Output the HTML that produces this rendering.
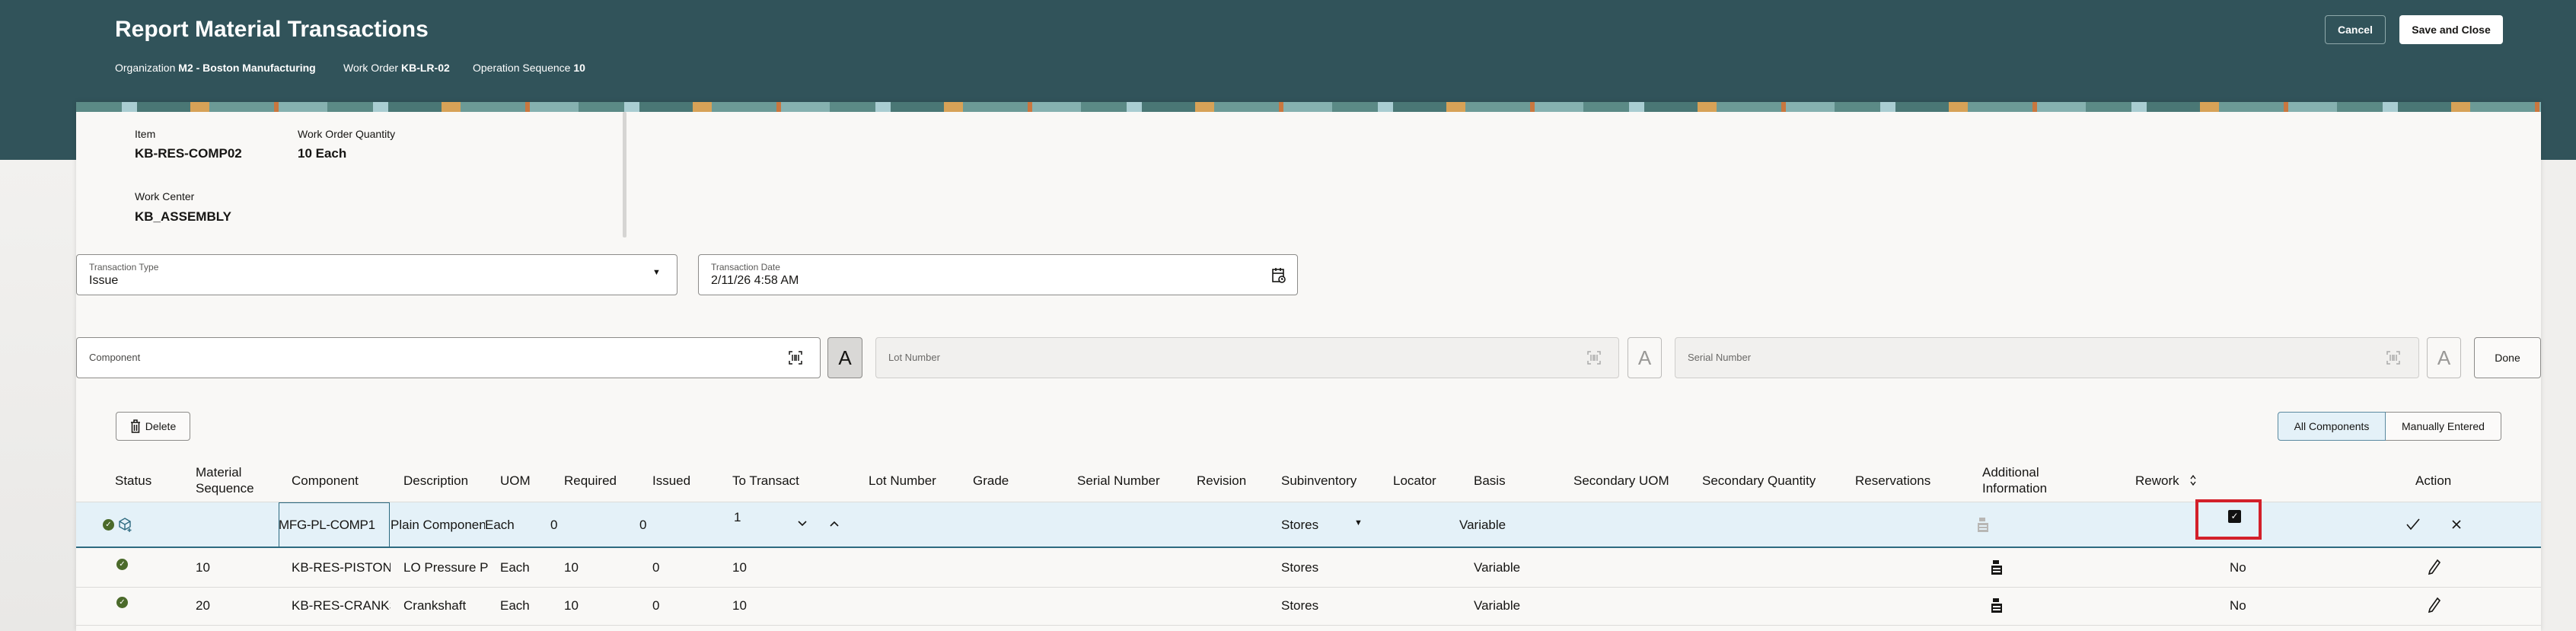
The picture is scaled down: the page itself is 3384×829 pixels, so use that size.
<!DOCTYPE html>
<html><head><meta charset="utf-8"><style>
*{box-sizing:border-box;margin:0;padding:0}
body{width:3384px;height:829px;overflow:hidden;background:#f0efed;font-family:"Liberation Sans",sans-serif;color:#161513;position:relative}
.a{position:absolute;white-space:nowrap}
.hdr{left:0;top:0;width:3384px;height:210px;background:#31535a}
.card{left:100px;top:134px;width:3238px;height:695px;background:#f9f8f6;box-shadow:0 0 6px rgba(0,0,0,.12)}
.band{left:100px;top:134px;width:3238px;height:13px;background:repeating-linear-gradient(90deg,#5b8a86 0 60px,#a9cdd2 60px 80px,#4a7775 80px 150px,#d7a257 150px 175px,#6c9a96 175px 260px,#c9773f 260px 266px,#86b1b0 266px 330px)}
.fld{border:1px solid #8c8b89;border-radius:4px;background:#fff}
.dis{border:1px solid #cfcecc;border-radius:4px;background:#f1f0ee}
.th{font-size:17px;color:#161513;line-height:21px}
.td{font-size:17px;color:#161513}
.btn{border:1px solid #8c8b89;border-radius:4px;background:#fbfaf9;font-size:14px;display:flex;align-items:center;justify-content:center}
.chk{width:15px;height:15px;border-radius:50%;background:#4b6a2a;color:#fff;font-size:10px;line-height:15px;text-align:center}
</style></head><body>
<div class="a hdr"></div>
<div class="a" style="left:0;top:210px;width:100px;height:619px;background:linear-gradient(180deg,#f2f1ef,#e9e8e6)"></div>
<div class="a card"></div>
<div class="a band"></div>
<div class="a" style="left:151px;top:22px;font-size:30px;font-weight:bold;color:#fff">Report Material Transactions</div>
<div class="a" style="left:151px;top:81px;font-size:14px;color:#fff">Organization <b>M2 - Boston Manufacturing</b></div>
<div class="a" style="left:451px;top:81px;font-size:14px;color:#fff">Work Order <b>KB-LR-02</b></div>
<div class="a" style="left:621px;top:81px;font-size:14px;color:#fff">Operation Sequence <b>10</b></div>
<div class="a" style="left:3054px;top:20px;width:80px;height:38px;border:1px solid #8fa9ab;border-radius:4px;color:#fff;font-size:14px;font-weight:bold;display:flex;align-items:center;justify-content:center">Cancel</div>
<div class="a" style="left:3152px;top:20px;width:136px;height:38px;background:#fff;border-radius:4px;font-size:14px;font-weight:bold;display:flex;align-items:center;justify-content:center">Save and Close</div>

<div class="a" style="left:177px;top:168px;font-size:14px">Item</div>
<div class="a" style="left:177px;top:192px;font-size:17px;font-weight:bold">KB-RES-COMP02</div>
<div class="a" style="left:391px;top:168px;font-size:14px">Work Order Quantity</div>
<div class="a" style="left:391px;top:192px;font-size:17px;font-weight:bold">10 Each</div>
<div class="a" style="left:177px;top:250px;font-size:14px">Work Center</div>
<div class="a" style="left:177px;top:275px;font-size:17px;font-weight:bold">KB_ASSEMBLY</div>
<div class="a" style="left:818px;top:147px;width:5px;height:165px;background:#d6d5d3;border-radius:2px"></div>

<div class="a fld" style="left:100px;top:334px;width:790px;height:54px"></div>
<div class="a" style="left:117px;top:344px;font-size:12px;color:#5a5957">Transaction Type</div>
<div class="a" style="left:117px;top:360px;font-size:16px">Issue</div>
<div class="a" style="left:857px;top:352px;font-size:11px">▼</div>
<div class="a fld" style="left:917px;top:334px;width:788px;height:54px"></div>
<div class="a" style="left:934px;top:344px;font-size:12px;color:#5a5957">Transaction Date</div>
<div class="a" style="left:934px;top:360px;font-size:16px">2/11/26 4:58 AM</div>
<svg class="a" style="left:1670px;top:351px" width="20" height="22" viewBox="0 0 20 22" fill="none" stroke="#161513" stroke-width="1.6"><rect x="2" y="3" width="14" height="16"/><line x1="6" y1="1" x2="6" y2="5"/><line x1="12" y1="1" x2="12" y2="5"/><line x1="2" y1="8" x2="16" y2="8"/><circle cx="14" cy="16" r="4" fill="#fff"/><path d="M14 14v2h1.5"/></svg>

<svg width="0" height="0" style="position:absolute"><defs><g id="bc"><path d="M1 5V1h4M13 1h4v4M17 13v4h-4M5 17H1v-4" fill="none" stroke="currentColor" stroke-width="1.5"/><path d="M5 5v8M8 5v8M10 5v8M13 5v8" stroke="currentColor" stroke-width="1.5"/></g></defs></svg>
<div class="a fld" style="left:100px;top:443px;width:978px;height:54px"></div>
<div class="a" style="left:117px;top:462px;font-size:13px;color:#4a4947">Component</div>
<svg class="a" style="left:1036px;top:461px;color:#161513" width="18" height="18"><use href="#bc"/></svg>
<div class="a" style="left:1087px;top:443px;width:46px;height:54px;background:#d9d8d6;border:1px solid #8c8b89;border-radius:4px;font-size:26px;text-align:center;line-height:52px">A</div>
<div class="a dis" style="left:1150px;top:443px;width:977px;height:54px"></div>
<div class="a" style="left:1167px;top:462px;font-size:13px;color:#6a6967">Lot Number</div>
<svg class="a" style="left:2085px;top:461px;color:#aaa" width="18" height="18"><use href="#bc"/></svg>
<div class="a" style="left:2138px;top:443px;width:45px;height:54px;border:1px solid #bcbbb9;border-radius:4px;font-size:26px;text-align:center;line-height:52px;color:#9a9997">A</div>
<div class="a dis" style="left:2200px;top:443px;width:978px;height:54px"></div>
<div class="a" style="left:2217px;top:462px;font-size:13px;color:#6a6967">Serial Number</div>
<svg class="a" style="left:3135px;top:461px;color:#aaa" width="18" height="18"><use href="#bc"/></svg>
<div class="a" style="left:3188px;top:443px;width:45px;height:54px;border:1px solid #bcbbb9;border-radius:4px;font-size:26px;text-align:center;line-height:52px;color:#9a9997">A</div>
<div class="a btn" style="left:3250px;top:443px;width:88px;height:54px">Done</div>

<div class="a btn" style="left:152px;top:541px;width:98px;height:38px;gap:6px"><svg width="14" height="18" viewBox="0 0 14 18" fill="none" stroke="#161513" stroke-width="1.5"><path d="M1 4h12M5 4V1h4v3M2.5 4v13h9V4M5.5 7v8M8.5 7v8"/></svg>Delete</div>
<div class="a" style="left:2992px;top:541px;width:142px;height:38px;background:#e4f1f8;border:1px solid #5b8aa0;border-radius:4px 0 0 4px;font-size:14px;display:flex;align-items:center;justify-content:center">All Components</div>
<div class="a" style="left:3134px;top:541px;width:152px;height:38px;background:#fbfaf9;border:1px solid #8c8b89;border-left:none;border-radius:0 4px 4px 0;font-size:14px;display:flex;align-items:center;justify-content:center">Manually Entered</div>

<div class="a th" style="left:151px;top:621px">Status</div>
<div class="a th" style="left:257px;top:610px">Material<br>Sequence</div>
<div class="a th" style="left:383px;top:621px">Component</div>
<div class="a th" style="left:530px;top:621px">Description</div>
<div class="a th" style="left:657px;top:621px">UOM</div>
<div class="a th" style="left:741px;top:621px">Required</div>
<div class="a th" style="left:857px;top:621px">Issued</div>
<div class="a th" style="left:962px;top:621px">To Transact</div>
<div class="a th" style="left:1141px;top:621px">Lot Number</div>
<div class="a th" style="left:1278px;top:621px">Grade</div>
<div class="a th" style="left:1415px;top:621px">Serial Number</div>
<div class="a th" style="left:1572px;top:621px">Revision</div>
<div class="a th" style="left:1683px;top:621px">Subinventory</div>
<div class="a th" style="left:1830px;top:621px">Locator</div>
<div class="a th" style="left:1936px;top:621px">Basis</div>
<div class="a th" style="left:2067px;top:621px">Secondary UOM</div>
<div class="a th" style="left:2236px;top:621px">Secondary Quantity</div>
<div class="a th" style="left:2437px;top:621px">Reservations</div>
<div class="a th" style="left:2604px;top:610px">Additional<br>Information</div>
<div class="a th" style="left:2805px;top:621px">Rework</div>
<svg class="a" style="left:2876px;top:623px" width="10" height="16" viewBox="0 0 10 16" fill="none" stroke="#161513" stroke-width="1.4"><path d="M2 6l3-4 3 4M2 10l3 4 3-4"/></svg>
<div class="a th" style="left:3173px;top:621px">Action</div>

<div class="a" style="left:100px;top:659px;width:3238px;height:1px;background:#dcdbd9"></div>
<div class="a" style="left:100px;top:660px;width:3238px;height:60px;background:#e4f1f8;border-bottom:2px solid #2d6a80"></div>
<div class="a chk" style="left:135px;top:682px">✓</div>
<svg class="a" style="left:156px;top:680px" width="18" height="20" viewBox="0 0 18 20" fill="none" stroke="#2d6a80" stroke-width="1.4"><path d="M8 1l7 4v7l-7 4-7-4V5z M1 5l7 4 7-4 M8 9v7"/><path d="M14 14v5M11.5 16.5h5"/></svg>
<div class="a" style="left:366px;top:660px;width:146px;height:60px;border:1px solid #2d6a80;border-bottom:none"></div>
<div class="a td" style="left:366px;top:680px;letter-spacing:-0.3px">MFG-PL-COMP1</div>
<div class="a td" style="left:513px;top:680px;width:124px;overflow:hidden">Plain Component</div>
<div class="a td" style="left:637px;top:680px">Each</div>
<div class="a td" style="left:723px;top:680px">0</div>
<div class="a td" style="left:840px;top:680px">0</div>
<div class="a td" style="left:964px;top:670px">1</div>
<svg class="a" style="left:1048px;top:684px" width="12" height="8" viewBox="0 0 12 8" fill="none" stroke="#161513" stroke-width="1.6"><path d="M1 1l5 5 5-5"/></svg>
<svg class="a" style="left:1090px;top:684px" width="12" height="8" viewBox="0 0 12 8" fill="none" stroke="#161513" stroke-width="1.6"><path d="M1 7l5-5 5 5"/></svg>
<div class="a td" style="left:1683px;top:680px">Stores</div>
<div class="a" style="left:1779px;top:681px;font-size:11px">▼</div>
<div class="a td" style="left:1917px;top:680px">Variable</div>
<svg class="a" style="left:2597px;top:680px" width="16" height="20" viewBox="0 0 16 20" fill="#b8b7b5"><rect x="3" y="0" width="8" height="5"/><rect x="1" y="7" width="14" height="12"/><rect x="3" y="10" width="10" height="2" fill="#e4f1f8"/><rect x="3" y="14" width="10" height="2" fill="#e4f1f8"/></svg>
<div class="a" style="left:2884px;top:656px;width:87px;height:53px;border:4px solid #d3202a"></div>
<div class="a" style="left:2927px;top:670px;width:17px;height:17px;background:#111;border-radius:2px;color:#fff;font-size:12px;text-align:center;line-height:17px">✓</div>
<svg class="a" style="left:3160px;top:681px" width="20" height="16" viewBox="0 0 20 16" fill="none" stroke="#161513" stroke-width="1.6"><path d="M2 8l5 6L18 1"/></svg>
<svg class="a" style="left:3220px;top:682px" width="14" height="14" viewBox="0 0 14 14" fill="none" stroke="#161513" stroke-width="1.6"><path d="M2 2l10 10M12 2L2 12"/></svg>

<div class="a" style="left:100px;top:771px;width:3238px;height:1px;background:#dcdbd9"></div>
<div class="a" style="left:100px;top:821px;width:3238px;height:1px;background:#dcdbd9"></div>
<div class="a chk" style="left:153px;top:734px">✓</div>
<div class="a td" style="left:257px;top:736px">10</div>
<div class="a td" style="left:383px;top:736px;width:130px;overflow:hidden">KB-RES-PISTONCAP</div>
<div class="a td" style="left:530px;top:736px;width:111px;overflow:hidden">LO Pressure Piston</div>
<div class="a td" style="left:657px;top:736px">Each</div>
<div class="a td" style="left:741px;top:736px">10</div>
<div class="a td" style="left:857px;top:736px">0</div>
<div class="a td" style="left:962px;top:736px">10</div>
<div class="a td" style="left:1683px;top:736px">Stores</div>
<div class="a td" style="left:1936px;top:736px">Variable</div>
<svg class="a" style="left:2615px;top:736px" width="16" height="20" viewBox="0 0 16 20" fill="#161513"><rect x="3" y="0" width="8" height="5"/><rect x="1" y="7" width="14" height="12"/><rect x="3" y="10" width="10" height="2" fill="#fff"/><rect x="3" y="14" width="10" height="2" fill="#fff"/></svg>
<div class="a td" style="left:2929px;top:736px">No</div>
<svg class="a" style="left:3188px;top:734px" width="20" height="22" viewBox="0 0 20 22" fill="none" stroke="#161513" stroke-width="1.6"><path d="M14 2l3 3L7 19l-4 1 1-4z"/></svg>

<div class="a chk" style="left:153px;top:784px">✓</div>
<div class="a td" style="left:257px;top:786px">20</div>
<div class="a td" style="left:383px;top:786px;width:130px;overflow:hidden">KB-RES-CRANKSHAFT</div>
<div class="a td" style="left:530px;top:786px">Crankshaft</div>
<div class="a td" style="left:657px;top:786px">Each</div>
<div class="a td" style="left:741px;top:786px">10</div>
<div class="a td" style="left:857px;top:786px">0</div>
<div class="a td" style="left:962px;top:786px">10</div>
<div class="a td" style="left:1683px;top:786px">Stores</div>
<div class="a td" style="left:1936px;top:786px">Variable</div>
<svg class="a" style="left:2615px;top:786px" width="16" height="20" viewBox="0 0 16 20" fill="#161513"><rect x="3" y="0" width="8" height="5"/><rect x="1" y="7" width="14" height="12"/><rect x="3" y="10" width="10" height="2" fill="#fff"/><rect x="3" y="14" width="10" height="2" fill="#fff"/></svg>
<div class="a td" style="left:2929px;top:786px">No</div>
<svg class="a" style="left:3188px;top:784px" width="20" height="22" viewBox="0 0 20 22" fill="none" stroke="#161513" stroke-width="1.6"><path d="M14 2l3 3L7 19l-4 1 1-4z"/></svg>
</body></html>
